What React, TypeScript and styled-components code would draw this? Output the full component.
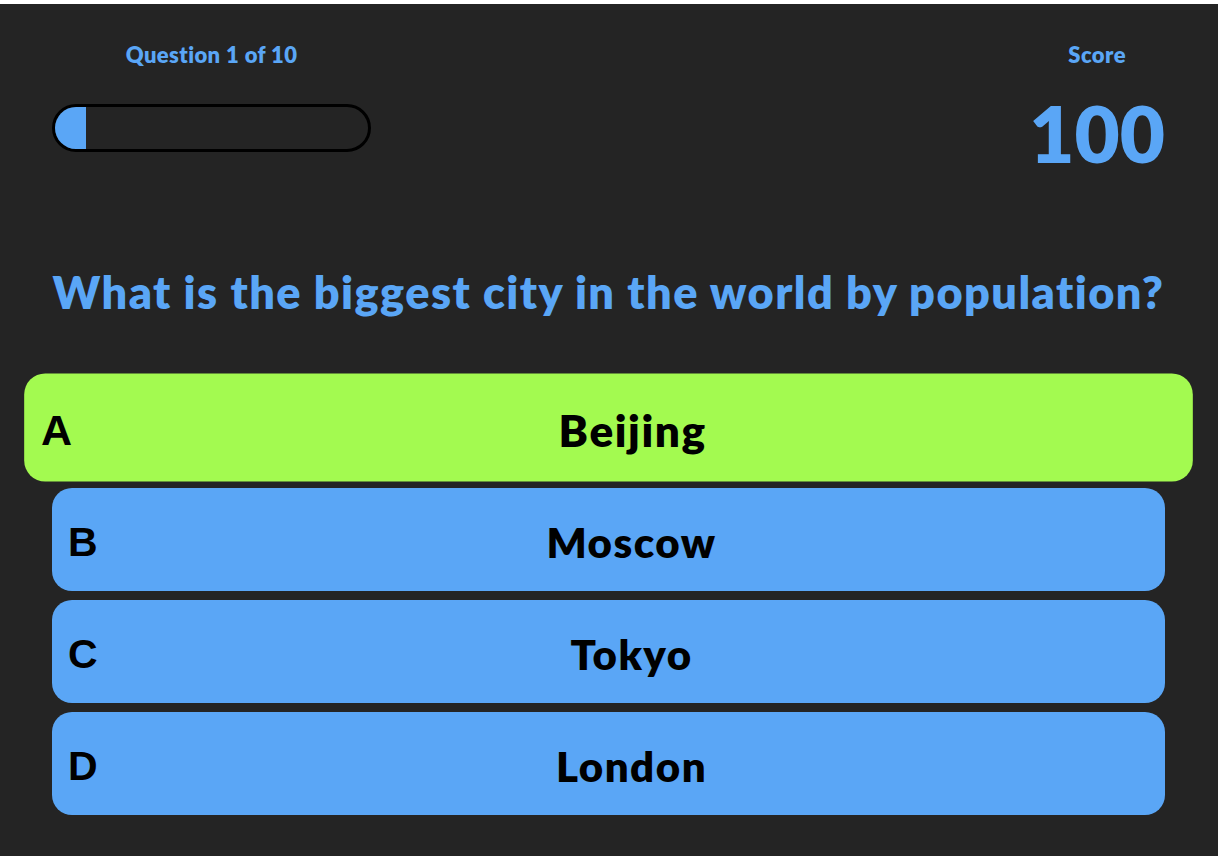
import React from "react";
import styled, { createGlobalStyle } from "styled-components";

const Global = createGlobalStyle`
  html, body { margin: 0; padding: 0; background: #ffffff; }
  body { padding-top: 4px; font-family: "Lato", "Open Sans", sans-serif; }
  * { box-sizing: border-box; }
`;

const Page = styled.div`
  background: #242424;
  min-height: 852px;
  padding: 38px 53px 40px 52px;
  display: flex;
  flex-direction: column;
`;

const Header = styled.header`
  display: flex;
  justify-content: space-between;
  align-items: flex-start;
`;

const Column = styled.div<{ $width?: number }>`
  display: flex;
  flex-direction: column;
  align-items: center;
  width: ${(p) => (p.$width ? `${p.$width}px` : "auto")};
`;

const Label = styled.div`
  color: #5aa6f6;
  font-family: "Lato", sans-serif;
  font-weight: 800;
  font-size: 22px;
  line-height: 26px;
  letter-spacing: 0.4px;
`;

const Track = styled.div`
  margin-top: 36px;
  width: 100%;
  height: 48px;
  border: 3px solid #000;
  border-radius: 24px;
  overflow: hidden;
  background: #242424;
`;

const Fill = styled.div`
  height: 100%;
  background: #5aa6f6;
`;

const Score = styled.div`
  color: #5aa6f6;
  font-family: "Lato", sans-serif;
  font-weight: 800;
  font-size: 78px;
  line-height: 80px;
  margin-top: 25px;
  letter-spacing: 0px;
`;

const Question = styled.h1`
  margin: 91px 0 0;
  text-align: center;
  color: #5aa6f6;
  font-family: "Lato", sans-serif;
  font-weight: 800;
  font-size: 45px;
  line-height: 56px;
  letter-spacing: 1.45px;
`;

const Answers = styled.div`
  margin-top: 56px;
  display: flex;
  flex-direction: column;
  gap: 9px;
`;

const Answer = styled.button<{ $selected?: boolean }>`
  display: flex;
  align-items: center;
  height: 103px;
  width: 100%;
  border: none;
  border-radius: 20px;
  padding: 0 0 0 16px;
  background: ${(p) => (p.$selected ? "#a3fa50" : "#5aa6f6")};
  color: #000;
  cursor: pointer;
  transform: ${(p) => (p.$selected ? "scale(1.05)" : "none")};
`;

const Letter = styled.span`
  font-family: "Liberation Sans", Arial, sans-serif;
  font-weight: 700;
  font-size: 41px;
  line-height: 1;
  width: 30px;
  text-align: left;
  margin-top: 6px;
`;

const AnswerText = styled.span`
  flex: 1;
  text-align: center;
  font-family: "Lato", sans-serif;
  font-weight: 800;
  font-size: 42px;
  line-height: 1;
  letter-spacing: 1.5px;
  margin-top: 4px;
`;

const answers = ["Beijing", "Moscow", "Tokyo", "London"];
const letters = ["A", "B", "C", "D"];

export default function App() {
  const progress = 10;
  return (
    <>
      <Global />
      <Page>
        <Header>
          <Column $width={319}>
            <Label>Question 1 of 10</Label>
            <Track>
              <Fill style={{ width: `${progress}%` }} />
            </Track>
          </Column>
          <Column>
            <Label>Score</Label>
            <Score>100</Score>
          </Column>
        </Header>
        <Question>What is the biggest city in the world by population?</Question>
        <Answers>
          {answers.map((a, i) => (
            <Answer key={a} $selected={i === 0}>
              <Letter>{letters[i]}</Letter>
              <AnswerText>{a}</AnswerText>
            </Answer>
          ))}
        </Answers>
      </Page>
    </>
  );
}
